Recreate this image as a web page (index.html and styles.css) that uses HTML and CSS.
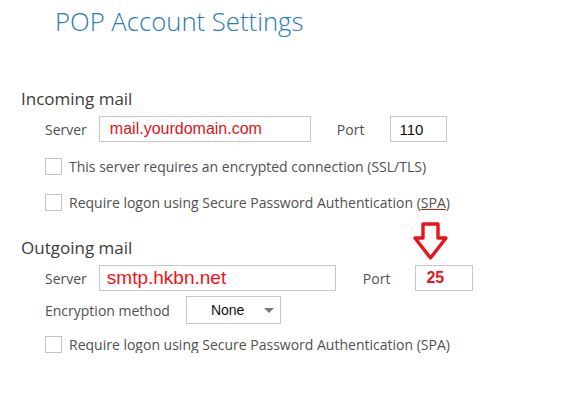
FILE: index.html
```html
<!DOCTYPE html>
<html lang="en">

<head>
    <meta charset="UTF-8">
    <title>POP Account Settings</title>
    <link rel="stylesheet" href="styles.css">
</head>

<body>
    <div class="container">
        <h1 class="title">POP Account Settings</h1>

        <h2 class="section">Incoming mail</h2>
        <div class="row">
            <span class="label">Server</span>
            <div class="field server-in"><span class="red-text">mail.yourdomain.com</span></div>
            <span class="label port-label">Port</span>
            <div class="field port-in"><span class="plain">110</span></div>
        </div>
        <div class="check-row first">
            <span class="box"></span>
            <span class="check-text">This server requires an encrypted connection (SSL/TLS)</span>
        </div>
        <div class="check-row">
            <span class="box"></span>
            <span class="check-text">Require logon using Secure Password Authentication (<span class="spa">SPA</span>)</span>
        </div>

        <h2 class="section out">Outgoing mail</h2>
        <div class="row">
            <span class="label">Server</span>
            <div class="field server-out"><span class="big-red">smtp.hkbn.net</span></div>
            <span class="label port-label2">Port</span>
            <div class="field port-out">
                <span class="bold-red">25</span>
                <svg class="arrow" width="36" height="40" viewBox="0 0 36 40">
                    <path d="M10 2 H25 V16 H33 L17.5 36 L2 16 H10 Z" fill="none" stroke="#e8141c" stroke-width="3.4" stroke-linejoin="round"/>
                </svg>
            </div>
        </div>
        <div class="row enc">
            <span class="label">Encryption method</span>
            <div class="select">
                <span class="sel-text">None</span>
                <span class="caret"></span>
            </div>
        </div>
        <div class="check-row last">
            <span class="box"></span>
            <span class="check-text">Require logon using Secure Password Authentication (SPA)</span>
        </div>
    </div>
</body>

</html>
```

FILE: styles.css
```css
body {
    margin: 0;
    padding: 0;
    background: #ffffff;
    font-family: "Open Sans", "Noto Sans", sans-serif;
    color: #444444;
}

.container {
    padding: 4px 0 0 21px;
}

.title {
    margin: 0 0 0 34px;
    font-size: 25.7px;
    font-weight: 300;
    color: #2b7bb9;
    line-height: 36px;
}

.section {
    margin: 47px 0 0 0;
    font-size: 17px;
    font-weight: 400;
    color: #3c3c3c;
    line-height: 24px;
}

.section.out {
    margin-top: 25px;
}

.row {
    display: flex;
    align-items: center;
    margin: 5px 0 0 24px;
    height: 26px;
}

.label {
    font-size: 14px;
    color: #505050;
}

.field {
    position: relative;
    box-sizing: border-box;
    height: 26px;
    border: 1px solid #c8c8c8;
    display: flex;
    align-items: center;
}

.server-in {
    width: 212px;
    margin-left: 12px;
    padding-left: 10px;
}

.port-label {
    margin-left: 26px;
}

.port-in {
    width: 57px;
    margin-left: 26px;
    padding-left: 8px;
}

.server-out {
    width: 237px;
    margin-left: 12px;
    padding-left: 7px;
}

.port-label2 {
    margin-left: 27px;
}

.port-out {
    width: 58px;
    margin-left: 25px;
    padding-left: 10px;
}

.red-text {
    font-family: "Liberation Sans", Arial, sans-serif;
    font-size: 16px;
    color: #d9141b;
}

.plain {
    font-family: "Liberation Sans", Arial, sans-serif;
    font-size: 15px;
    color: #111111;
}

.big-red {
    font-family: "Liberation Sans", Arial, sans-serif;
    font-size: 19px;
    color: #f5101a;
}

.bold-red {
    font-family: "Liberation Sans", Arial, sans-serif;
    font-size: 16px;
    font-weight: bold;
    color: #e8141c;
}

.arrow {
    position: absolute;
    left: -3px;
    top: -44px;
}

.check-row {
    display: flex;
    align-items: center;
    margin: 19px 0 0 24px;
    height: 17px;
}

.check-row.first {
    margin-top: 16px;
}

.box {
    box-sizing: border-box;
    width: 17px;
    height: 17px;
    border: 1px solid #c4c4c4;
    margin-right: 7px;
}

.check-text {
    font-size: 14px;
    color: #505050;
}

.spa {
    text-decoration: underline;
    text-decoration-color: #d9141b;
}

.enc {
    margin-top: 5px;
    height: 28px;
}

.select {
    box-sizing: border-box;
    width: 95px;
    height: 28px;
    margin-left: 16px;
    border: 1px solid #c8c8c8;
    display: flex;
    align-items: center;
    position: relative;
}

.sel-text {
    font-family: "Liberation Sans", Arial, sans-serif;
    font-size: 14px;
    color: #111111;
    margin-left: 24px;
}

.caret {
    position: absolute;
    right: 6px;
    top: 11px;
    width: 0;
    height: 0;
    border-left: 5px solid transparent;
    border-right: 5px solid transparent;
    border-top: 5px solid #777777;
}

.check-row.last {
    margin-top: 12px;
}
```
